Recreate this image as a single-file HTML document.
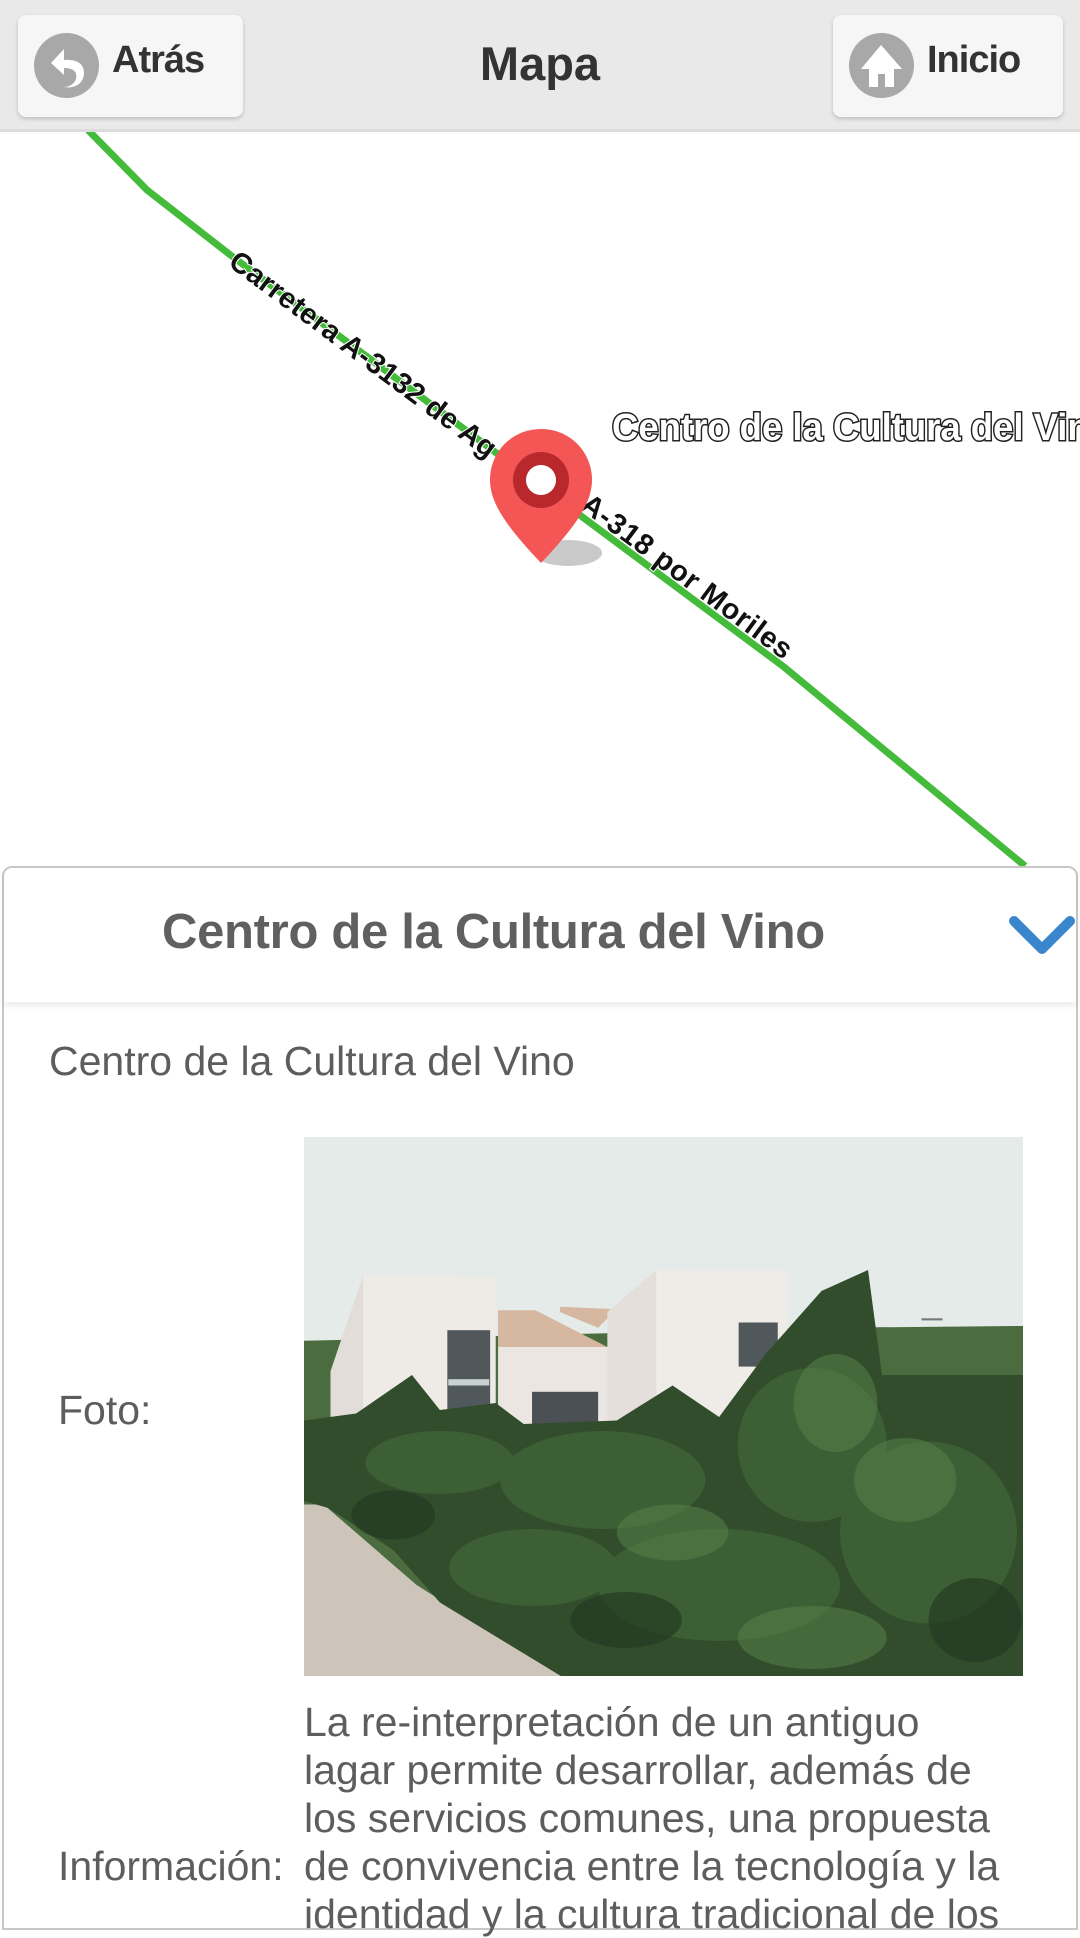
<!DOCTYPE html>
<html><head><meta charset="utf-8"><style>
html,body{margin:0;padding:0;width:1080px;height:1920px;overflow:hidden;background:#fff;font-family:"Liberation Sans",sans-serif;}
.hdr{position:absolute;left:0;top:0;width:1080px;height:129px;background:#e9e9e9;border-bottom:3px solid #dcdcdc;}
.btn{position:absolute;top:15px;height:102px;background:#f6f6f6;border-radius:8px;box-shadow:0 2px 4px rgba(0,0,0,.18);}
.btn .ic{position:absolute;left:16px;top:18px;width:65px;height:65px;border-radius:50%;background:#a8a8a8;}
.btn .t{position:absolute;left:94px;top:24px;font-size:38px;font-weight:bold;color:#333;letter-spacing:-1px;}
.title{position:absolute;left:0;width:1080px;top:36px;text-align:center;font-size:47px;font-weight:bold;color:#333;}
.panel{position:absolute;left:2px;top:866px;width:1072px;height:1060px;border:2px solid #c8c8c8;border-radius:10px 10px 0 0;background:#fff;}
.ph{position:absolute;left:0;top:0;width:1072px;height:134px;box-shadow:0 4px 6px rgba(0,0,0,.08);}
.ph .t{position:absolute;left:158px;top:36px;font-size:49px;color:#606060;font-weight:bold;letter-spacing:-0.3px;}
.txt{color:#5d5d5d;font-size:41px;position:absolute;white-space:nowrap;}
</style></head><body>
<svg style="position:absolute;left:0;top:132px" width="1080" height="740" viewBox="0 132 1080 740">
<polyline points="88,130 147,190 233,257 784,667 1025,866" fill="none" stroke="#44bb3a" stroke-width="7"/>
<g font-family="Liberation Sans" font-weight="bold" font-size="29" fill="#111" stroke="#fff" stroke-width="2" paint-order="stroke">
<text transform="translate(233,257) rotate(36.65)" dy="10" textLength="325">Carretera A-3132 de Ag</text>
<text transform="translate(585,500) rotate(36.65)" dy="10" textLength="255">A-318 por Moriles</text>
</g>
<text x="612" y="440" font-family="Liberation Sans" font-weight="bold" font-size="38" fill="#fff" stroke="#222" stroke-width="3" paint-order="stroke" textLength="500" lengthAdjust="spacingAndGlyphs">Centro de la Cultura del Vino</text>
<ellipse cx="568" cy="553" rx="34" ry="13" fill="#bbb" opacity=".8"/>
<path d="M541,429 C512,429 490,452 490,480 C490,505 510,530 541,563 C572,530 592,505 592,480 C592,452 570,429 541,429Z" fill="#f45555"/>
<circle cx="541" cy="480" r="28" fill="#b8282c"/>
<circle cx="541" cy="480" r="15" fill="#fff"/>
</svg>
<div class="hdr">
 <div class="btn" style="left:18px;width:225px"><div class="ic"><svg width="65" height="65" viewBox="0 0 65 65"><path d="M30,16 L17,30 L30,42 L30,35 C38,35 44,38 42,46 C40,52 34,54 30,54 C41,56 50,50 50,40 C50,30 42,26 30,27Z" fill="#fff"/></svg></div><div class="t">Atrás</div></div>
 <div class="btn" style="left:833px;width:230px"><div class="ic"><svg width="65" height="65" viewBox="0 0 65 65"><path d="M32,12 L12,36 L20,36 L20,54 L29,54 L29,41 L36,41 L36,54 L45,54 L45,36 L53,36Z" fill="#fff"/></svg></div><div class="t">Inicio</div></div>
 <div class="title">Mapa</div>
</div>
<div class="panel">
 <div class="ph"><div class="t">Centro de la Cultura del Vino</div>
 <svg style="position:absolute;left:1004px;top:45px" width="68" height="46" viewBox="0 0 68 46"><path d="M6,8 L34,36 L62,8" fill="none" stroke="#3a86cc" stroke-width="10" stroke-linecap="round" stroke-linejoin="round"/></svg></div>
</div>
<div class="txt" style="left:49px;top:1038px">Centro de la Cultura del Vino</div>
<div class="txt" style="left:58px;top:1387px">Foto:</div>
<svg style="position:absolute;left:304px;top:1137px" width="719" height="539" viewBox="8 20 1545 1540" preserveAspectRatio="none">
<rect x="8" y="20" width="1545" height="1540" fill="#e5ebe9"/>
<path d="M8,602 L80,600 L1130,565 L1553,560 L1553,1560 L8,1560Z" fill="#4b6c3e"/>
<path d="M65,690 L135,415 L420,420 L420,860 L65,860Z" fill="#eeeae6"/>
<path d="M65,690 L135,415 L135,860 L65,860Z" fill="#e2ddd8"/>
<path d="M425,515 L505,515 L660,620 L425,620Z" fill="#d6b7a0"/>
<rect x="425" y="620" width="240" height="240" fill="#ebe6e1"/>
<path d="M558,505 L680,512 L640,565 L558,520Z" fill="#d6b7a0"/>
<path d="M660,520 L765,400 L1047,402 L1047,860 L660,860Z" fill="#efebe7"/>
<path d="M660,520 L765,400 L765,860 L660,860Z" fill="#e4dfda"/>
<rect x="316" y="572" width="92" height="260" fill="#50585c"/><rect x="318" y="712" width="88" height="18" fill="#c9d2d2"/>
<rect x="942" y="550" width="84" height="126" fill="#50585c"/>
<rect x="498" y="748" width="142" height="100" fill="#4a5054"/>
<rect x="1335" y="538" width="45" height="6" fill="#777"/>
<path d="M8,1070 L50,1070 L250,1300 L560,1560 L8,1560Z" fill="#cdc5b9"/>
<path d="M8,830 L120,810 L240,700 L300,800 L420,780 L480,840 L680,830 L800,730 L900,820 L1000,640 L1120,460 L1220,400 L1250,700 L1553,700 L1553,1560 L560,1560 L300,1350 L200,1200 L60,1080 L8,1060Z" fill="#314d2c"/>
<g fill="#3f6236" opacity=".9">
<ellipse cx="300" cy="950" rx="160" ry="90"/><ellipse cx="650" cy="1000" rx="220" ry="140"/><ellipse cx="1100" cy="900" rx="160" ry="220"/>
<ellipse cx="900" cy="1300" rx="260" ry="160"/><ellipse cx="1350" cy="1150" rx="190" ry="260"/><ellipse cx="500" cy="1250" rx="180" ry="110"/>
</g>
<g fill="#557d48" opacity=".6">
<ellipse cx="1150" cy="780" rx="90" ry="140"/><ellipse cx="1300" cy="1000" rx="110" ry="120"/><ellipse cx="800" cy="1150" rx="120" ry="80"/><ellipse cx="1100" cy="1450" rx="160" ry="90"/>
</g>
<g fill="#243b22" opacity=".7">
<ellipse cx="200" cy="1100" rx="90" ry="70"/><ellipse cx="700" cy="1400" rx="120" ry="80"/><ellipse cx="1450" cy="1400" rx="100" ry="120"/>
</g>
</svg>
<div class="txt" style="left:304px;top:1698px;line-height:48px">La re-interpretación de un antiguo<br>lagar permite desarrollar, además de<br>los servicios comunes, una propuesta<br>de convivencia entre la tecnología y la<br>identidad y la cultura tradicional de los</div>
<div class="txt" style="left:58px;top:1843px">Información:</div>
</body></html>
